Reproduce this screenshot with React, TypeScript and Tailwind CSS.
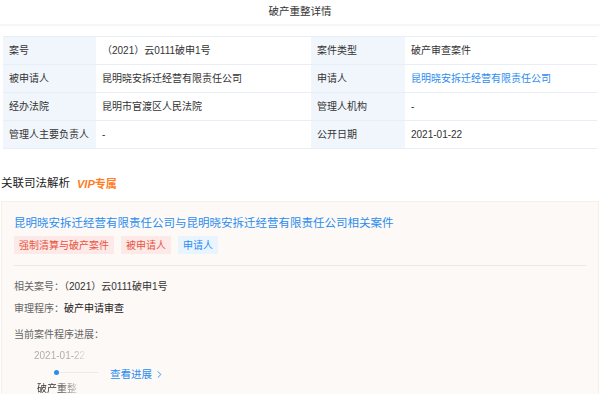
import { ChevronRight } from "lucide-react";

const ROWS: [string, string, string, string, boolean][] = [
  ["案号", "（2021）云0111破申1号", "案件类型", "破产审查案件", false],
  ["被申请人", "昆明晓安拆迁经营有限责任公司", "申请人", "昆明晓安拆迁经营有限责任公司", true],
  ["经办法院", "昆明市官渡区人民法院", "管理人机构", "-", false],
  ["管理人主要负责人", "-", "公开日期", "2021-01-22", false],
];

const TAGS = [
  { text: "强制清算与破产案件", cls: "bg-[#fde9e7] text-[#e8553f]" },
  { text: "被申请人", cls: "bg-[#fde9e7] text-[#e8553f]" },
  { text: "申请人", cls: "bg-[#eaf4ff] text-[#2b8cf0]" },
];

export default function App() {
  const label = "flex h-[28px] items-center border-b border-[#e8eef5] bg-[#f1f6fc] px-[6px] text-[#333]";
  const cell = "flex h-[28px] items-center border-b border-[#e8eef5] px-[6px]";

  return (
    <div className="h-[394px] w-[600px] overflow-hidden bg-white font-['Liberation_Sans','Noto_Sans_CJK_SC',sans-serif] text-[10px] text-[#333]">
      <div className="flex h-[24px] items-center justify-center text-[10.5px] text-[#333]">破产重整详情</div>
      <div className="h-[2px] bg-[#f4f7fa]" />

      <div className="px-[3px] pt-[10px]">
        <div className="grid grid-cols-[93px_215px_94px_1fr] border-t border-[#e8eef5]">
          {ROWS.map(([l1, v1, l2, v2, link]) => (
            <div key={l1} className="contents">
              <div className={label}>{l1}</div>
              <div className={`${cell} text-[#333]`}>{v1}</div>
              <div className={label}>{l2}</div>
              <div className={`${cell} ${link ? "text-[#2b8cf0]" : "text-[#333]"}`}>{v2}</div>
            </div>
          ))}
        </div>
      </div>

      <div className="mt-[27px] flex h-[16px] items-center gap-[7px] pl-[1px]">
        <span className="text-[11.5px] text-[#222]">关联司法解析</span>
        <span className="text-[11px] font-bold text-[#ff7d1f]">
          <span className="italic">VIP</span>专属
        </span>
      </div>

      <div className="mx-[1px] mt-[9px] h-[200px] border border-[#f6eee8] bg-[#fdf9f6] px-[12px]">
        <div className="mt-[13px] h-[16px] text-[11.5px] leading-[16px] text-[#2b8cf0]">
          昆明晓安拆迁经营有限责任公司与昆明晓安拆迁经营有限责任公司相关案件
        </div>
        <div className="mt-[5px] flex gap-[7px]">
          {TAGS.map((t) => (
            <span key={t.text} className={`flex h-[18px] items-center px-[5px] text-[10px] ${t.cls}`}>
              {t.text}
            </span>
          ))}
        </div>
        <div className="mt-[11px] h-px bg-[#f0e8e2]" />

        <div className="mt-[13px] h-[16px] leading-[16px]">
          <span className="text-[#666]">相关案号：</span>
          <span className="text-[#333]">（2021）云0111破申1号</span>
        </div>
        <div className="mt-[6px] h-[16px] leading-[16px]">
          <span className="text-[#666]">审理程序：</span>
          <span className="text-[#222]">破产申请审查</span>
        </div>
        <div className="mt-[10px] h-[16px] leading-[16px] text-[#666]">当前案件程序进展：</div>

        <div className="mt-[6px] flex items-start">
          <div className="ml-[8px] w-[76px]">
            <div className="h-[14px] pl-[12px] leading-[14px]">
              <span className="bg-gradient-to-r from-[#aaa] from-75% to-[#e4e4e4] bg-clip-text text-transparent">2021-01-22</span>
            </div>
            <div className="mt-[6px] flex h-[6px] items-center pl-[32px]">
              <span className="h-[5px] w-[5px] rounded-full bg-[#2b8cf0]" />
              <span className="h-px flex-1 bg-[#ebebeb]" />
            </div>
            <div className="mt-[6px] h-[16px] pl-[15px] leading-[16px]">
              <span className="bg-gradient-to-r from-[#333] from-50% to-[#d0d0d0] bg-clip-text text-transparent">破产重整</span>
            </div>
          </div>
          <div className="ml-[12px] mt-[18px] flex items-center text-[10.5px] text-[#2b8cf0]">
            查看进展
            <ChevronRight size={11} strokeWidth={2} className="ml-[2px]" />
          </div>
        </div>
      </div>
    </div>
  );
}
